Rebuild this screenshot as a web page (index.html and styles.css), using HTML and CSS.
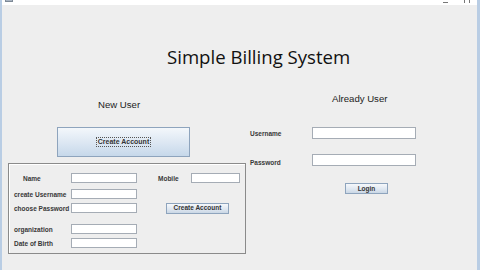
FILE: index.html
```html
<!DOCTYPE html>
<html>
<head>
<meta charset="utf-8">
<link rel="stylesheet" href="styles.css">
</head>
<body>
<div class="window">
  <div class="titlebar">
    <span class="app-icon"></span>
    <span class="spacer"></span>
    <span class="ctl-min"></span>
    <span class="ctl-max"></span>
  </div>
  <div class="content">
    <h1 class="title">Simple Billing System</h1>
    <div class="columns">
      <div class="left">
        <div class="heading new-user">New User</div>
        <button class="big-btn"><span class="focus">Create Account</span></button>
        <div class="panel">
          <div class="prow r1">
            <span class="lbl name-lbl">Name</span>
            <span class="field f-left"></span>
            <span class="lbl mobile-lbl">Mobile</span>
            <span class="field f-mobile"></span>
          </div>
          <div class="prow r2">
            <span class="lbl">create Username</span>
            <span class="field f-left"></span>
          </div>
          <div class="prow r3">
            <span class="lbl">choose Password</span>
            <span class="field f-left"></span>
            <button class="small-btn create-btn">Create Account</button>
          </div>
          <div class="prow r4">
            <span class="lbl">organization</span>
            <span class="field f-left"></span>
          </div>
          <div class="prow r5">
            <span class="lbl">Date of Birth</span>
            <span class="field f-left"></span>
          </div>
        </div>
      </div>
      <div class="right">
        <div class="heading already">Already User</div>
        <div class="lrow l1">
          <span class="lbl rlbl">Username</span>
          <span class="field f-right"></span>
        </div>
        <div class="lrow l2">
          <span class="lbl rlbl">Password</span>
          <span class="field f-right"></span>
        </div>
        <button class="small-btn login-btn">Login</button>
      </div>
    </div>
  </div>
</div>
</body>
</html>
```

FILE: styles.css
```css
html, body {
  margin: 0;
  padding: 0;
  width: 480px;
  height: 270px;
  overflow: hidden;
  background: #eeeeee;
}
.window {
  box-sizing: border-box;
  width: 480px;
  height: 270px;
  background: #eeeeee;
  border-left: 2px solid #b9cde4;
  border-right: 3px solid #b9cde4;
  display: flex;
  flex-direction: column;
  font-family: "Liberation Sans", Arial, sans-serif;
}
.titlebar {
  height: 5px;
  background: #ffffff;
  display: flex;
  align-items: flex-start;
  flex: none;
}
.app-icon {
  width: 8px;
  height: 2px;
  margin-left: 3px;
  background: #a9b4c2;
  border: 1px solid #7d8996;
  border-top: none;
  box-sizing: border-box;
}
.spacer { flex: 1; }
.ctl-min {
  width: 5px;
  height: 1px;
  margin-top: 2px;
  background: #777;
  margin-right: 16px;
}
.ctl-max {
  width: 4px;
  height: 3px;
  border-left: 1px solid #777;
  border-right: 1px solid #777;
  margin-right: 7px;
}
.content {
  flex: 1;
  display: flex;
  flex-direction: column;
}
.title {
  margin: 39px 0 0 165px;
  font-family: "Open Sans", "Noto Sans", sans-serif;
  font-weight: normal;
  font-size: 18.6px;
  line-height: 26px;
  color: #111;
  white-space: nowrap;
}
.columns {
  display: flex;
}
.left {
  width: 238px;
  padding-left: 6px;
  display: flex;
  flex-direction: column;
}
.heading {
  font-family: "Liberation Sans", Arial, sans-serif;
  font-size: 9.6px;
  line-height: 12px;
  color: #222;
  white-space: nowrap;
}
.new-user {
  margin: 29px 0 0 90px;
}
.big-btn {
  margin: 16px 0 0 49px;
  width: 133px;
  height: 30px;
  padding: 0;
  border: 1px solid #8ea4bd;
  background: linear-gradient(#f3f7fb, #dbe6f2 55%, #c6d8ea);
  display: flex;
  align-items: center;
  justify-content: center;
}
.focus {
  font-family: "Liberation Sans", Arial, sans-serif;
  font-size: 7px;
  font-weight: bold;
  color: #333;
  border: 1px dotted #555;
  padding: 0 1px;
  line-height: 8px;
}
.panel {
  margin-top: 6px;
  width: 238px;
  height: 91px;
  box-sizing: border-box;
  border: 1px solid #8a8a8a;
  box-shadow: inset 1px 1px 0 #ffffff;
  padding: 9px 0 0 5px;
  display: flex;
  flex-direction: column;
}
.prow {
  display: flex;
  align-items: center;
  height: 10px;
}
.r2 { margin-top: 6px; }
.r3 { margin-top: 4px; }
.r4 { margin-top: 11px; }
.r5 { margin-top: 4px; }
.lbl {
  font-size: 6.5px;
  font-weight: bold;
  color: #383838;
  white-space: nowrap;
  width: 57px;
  flex: none;
}
.name-lbl { padding-left: 9px; box-sizing: border-box; }
.field {
  display: block;
  box-sizing: border-box;
  height: 10px;
  background: #ffffff;
  border: 1px solid #a5acb5;
  flex: none;
}
.f-left { width: 66px; }
.mobile-lbl { margin-left: 21px; width: 33px; }
.f-mobile { width: 49px; }
.small-btn {
  box-sizing: border-box;
  padding: 0;
  border: 1px solid #8ea4bd;
  background: linear-gradient(#f6f8fb, #dde6f0 60%, #cad7e5);
  font-family: "Liberation Sans", Arial, sans-serif;
  font-size: 6.5px;
  font-weight: bold;
  color: #333;
  line-height: 8px;
}
.create-btn {
  margin-left: 29px;
  width: 63px;
  height: 11px;
}
.right {
  flex: 1;
  display: flex;
  flex-direction: column;
  padding-left: 4px;
}
.already {
  margin: 23px 0 0 82px;
}
.lrow {
  display: flex;
  align-items: center;
  height: 12px;
}
.l1 { margin-top: 22px; }
.l2 { margin-top: 15px; }
.rlbl { width: 62px; }
.l2 .rlbl { position: relative; top: 2px; }
.f-right { width: 104px; height: 12px; }
.login-btn {
  margin: 17px 0 0 95px;
  width: 43px;
  height: 11px;
}
```
